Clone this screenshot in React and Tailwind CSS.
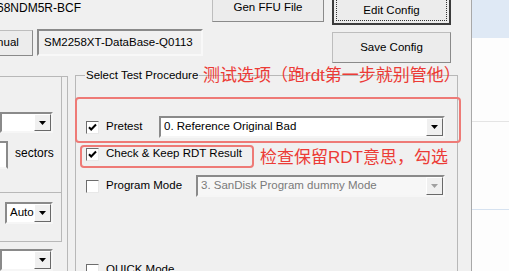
import clsx from 'clsx';

const Tri = ({ disabled }) => (
  <svg width="7" height="4" viewBox="0 0 7 4">
    <path d="M0 0h7L3.5 4z" fill={disabled ? '#a0a0a0' : '#000'} />
  </svg>
);

function Combo({ text, disabled, className }) {
  return (
    <div
      className={clsx(
        'flex border-2 border-t-[#8a8a8a] border-l-[#8a8a8a] border-r-[#f6f6f6] border-b-[#f6f6f6]',
        disabled ? 'bg-[#f7f7f7] text-[#7a7a7a]' : 'bg-white',
        className
      )}
    >
      <div className="flex-1 min-w-0 pl-[3px] flex items-center whitespace-nowrap overflow-hidden">{text}</div>
      <div className="w-[17px] shrink-0 flex items-center justify-center bg-[#f0f0f0] border border-t-white border-l-white border-r-[#696969] border-b-[#696969]">
        <Tri disabled={disabled} />
      </div>
    </div>
  );
}

function Check({ checked }) {
  return (
    <div className="w-[13px] h-[13px] shrink-0 bg-white border border-t-[#6d6d6d] border-l-[#6d6d6d] border-r-[#e8e8e8] border-b-[#e8e8e8] flex items-center justify-center">
      {checked && (
        <svg width="9" height="9" viewBox="0 0 9 9">
          <path d="M1 4.2l2.2 2.3L8 1.5" stroke="#000" strokeWidth="2" fill="none" />
        </svg>
      )}
    </div>
  );
}

function Btn({ children, className }) {
  return (
    <div
      className={clsx(
        'flex items-center justify-center bg-[#ececec] border border-t-[#bdbdbd] border-l-[#bdbdbd] border-r-[#8a8a8a] border-b-[#8a8a8a] whitespace-nowrap',
        className
      )}
    >
      {children}
    </div>
  );
}

export default function App() {
  return (
    <div className="w-[509px] h-[271px] overflow-hidden bg-[#f0f0f0] flex font-['Liberation_Sans','Noto_Sans_CJK_SC',sans-serif] text-[11.5px] text-black">
      <div className="relative w-[471px] shrink-0 flex flex-col">
        {/* top controls */}
        <div className="flex h-[64px] shrink-0">
          <div className="w-[332px] flex flex-col">
            <div className="flex h-[29px]">
              <div className="w-[212px] -ml-[3px] pt-[1px] leading-[14px] text-[12px]">68NDM5R-BCF</div>
              <Btn className="w-[112px] h-[30px] -mt-[8px] pt-[2px] ml-[3px]">Gen FFU File</Btn>
            </div>
            <div className="flex items-start">
              <Btn className="w-[66px] h-[26px] -ml-[33px] mt-[1px]">Manual</Btn>
              <div className="ml-[4px] w-[166px] h-[27px] flex items-center pl-[5px] bg-[#f0f0f0] border-2 border-t-[#8a8a8a] border-l-[#8a8a8a] border-r-[#f8f8f8] border-b-[#f8f8f8] whitespace-nowrap">
                SM2258XT-DataBase-Q0113
              </div>
            </div>
          </div>
          <div className="w-[119px] flex flex-col">
            <div className="h-[30px] -mt-[5px] border-2 border-[#3c3c3c] bg-[#ececec] p-[2px]">
              <div className="h-full border border-dotted border-[#333] flex items-center justify-center pt-[2px]">
                Edit Config
              </div>
            </div>
            <Btn className="h-[31px] mt-[7px]">Save Config</Btn>
          </div>
        </div>

        {/* lower area */}
        <div className="flex flex-1 min-h-0">
          <div className="w-[68px] shrink-0 mt-[12px] border-t border-r border-[#b8b8b8] flex flex-col">
            <div className="w-[62px] h-[117px] border-r border-b border-[#b8b8b8] flex flex-col">
              <Combo className="w-[53px] h-[21px] mt-[35px]" text="" />
              <div className="flex items-center mt-[8px]">
                <div className="w-[8px] h-[28px] bg-white border-2 border-t-[#8a8a8a] border-r-[#8a8a8a] border-b-[#f6f6f6] border-l-0" />
                <span className="ml-[7px] -mt-[5px] text-[12px]">sectors</span>
              </div>
            </div>
            <div className="w-[62px] h-[50px] border-r border-b border-[#b8b8b8] flex flex-col">
              <Combo className="w-[48px] h-[22px] ml-[5px] mt-[9px]" text="Auto" />
            </div>
            <Combo className="w-[53px] h-[22px] mt-[7px]" text="" />
          </div>

          <fieldset className="ml-[7px] mt-[4px] w-[383px] h-[230px] border border-[#b8b8b8] shrink-0">
            <legend className="ml-[9px] px-[1px] leading-[14px]">Select Test Procedure</legend>
            <div className="flex items-center h-[22px] mt-[34px] pl-[10px]">
              <Check checked />
              <span className="ml-[7px] w-[53px]">Pretest</span>
              <Combo className="w-[286px] h-[22px]" text="0. Reference Original Bad" />
            </div>
            <div className="flex items-center h-[22px] mt-[5px] pl-[10px]">
              <Check checked />
              <span className="ml-[7px]">Check &amp; Keep RDT Result</span>
            </div>
            <div className="flex items-center h-[22px] mt-[10px] pl-[10px]">
              <Check />
              <span className="ml-[7px] w-[90px]">Program Mode</span>
              <Combo className="w-[249px] h-[22px]" text="3. SanDisk Program dummy Mode" disabled />
            </div>
            <div className="flex items-center h-[22px] mt-[62px] pl-[10px]">
              <Check />
              <span className="ml-[7px]">QUICK Mode</span>
            </div>
          </fieldset>
        </div>

        {/* red annotations */}
        <div className="absolute left-[203px] top-[64px] text-[17px] leading-[23px] text-[#ec3b36] whitespace-nowrap">
          测试选项（跑rdt第一步就别管他）
        </div>
        <div className="absolute left-[75px] top-[97px] w-[386px] h-[46px] border-2 border-[#ee7a76] rounded-[4px]" />
        <div className="absolute left-[80px] top-[145px] w-[174px] h-[23px] border-2 border-[#ee7a76] rounded-[4px]" />
        <div className="absolute left-[260px] top-[146px] text-[17px] leading-[23px] text-[#ec3b36] whitespace-nowrap">
          检查保留RDT意思，勾选
        </div>
      </div>

      {/* right edge strip */}
      <div className="flex-1 border-l border-[#a8a8a8] flex flex-col">
        <div className="h-[38px] bg-[#dfe9f5]" />
        <div className="flex-1 bg-[#fdfdfd] flex flex-col">
          <div className="h-[84px] border-b border-[#e4e4e4]" />
          <div className="h-[88px] border-b border-[#d6e2f0]" />
        </div>
      </div>
    </div>
  );
}
